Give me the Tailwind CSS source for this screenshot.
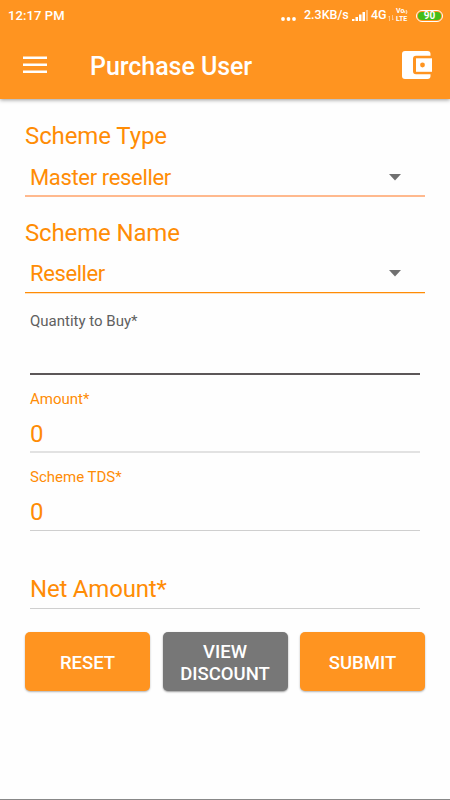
<!DOCTYPE html>
<html lang="en">
<head>
<meta charset="utf-8">
<title>Purchase User</title>
<script src="https://cdn.jsdelivr.net/npm/@tailwindcss/browser@4"></script>
</head>
<body class="bg-[#fefefe] font-[Roboto,sans-serif] text-[#ff8c05]">
<div class="flex h-[800px] w-[450px] flex-col overflow-hidden border-b border-[#888]">
  <header class="h-[99px] shrink-0 bg-[#ff9420] text-white shadow-[0_1px_4px_rgba(0,0,0,0.4)]">
    <div class="flex h-[31px] items-center pl-2 pr-[7px] text-[13px] font-medium">
      <span class="tracking-[0.1px]">12:17 PM</span>
      <svg class="ml-auto mr-[8px] mt-[7px]" width="15" height="4" fill="#fff"><circle cx="2" cy="2" r="1.900"/><circle cx="7.500" cy="2" r="1.900"/><circle cx="13" cy="2" r="1.900"/></svg>
      <span class="w-[45px] whitespace-nowrap text-[12.5px]">2.3KB/s</span>
      <svg class="ml-[3px]" width="17" height="13" fill="#fff"><path d="M0 10h2.500v2H0zM3.500 8H6v4H3.500zM7 5.500h2.500V12H7zM10.500 3H13v9h-2.500z"/><path opacity=".4" d="M14 1h2v11h-2z"/></svg>
      <span class="ml-[2px] w-[16px] text-[12.500px]">4G</span>
      <svg class="ml-[1px] mt-[5px]" width="6" height="6" fill="none" stroke="#fff" stroke-opacity=".45"><path d="M1.500 6V1L0 2.500M4.500 0v5L6 3.500"/></svg>
      <div class="ml-[2px] flex h-[15px] w-[15px] flex-col justify-between text-[7px] font-bold leading-[7px]"><div class="flex h-[7px] items-center">Vo<svg width="4" height="6" fill="none" stroke="#fff" stroke-width=".8"><path d="M.5 2q1 1 0 2M2 1q2 2 0 4"/></svg></div><div class="h-[7px]">LTE</div></div>
      <div class="ml-[5px] flex h-[12px] w-[27px] items-center justify-center rounded-full border border-white p-px"><div class="flex h-full w-full items-center justify-center rounded-full bg-[#43bd19] text-[10px] font-bold leading-none">90</div></div>
    </div>
    <div class="flex h-[68px] items-center pl-[23px] pr-[18px]">
      <svg width="24" height="18" fill="#fff"><path d="M0 .4h24v2.600H0zM0 7.400h24v2.600H0zM0 14.400h24v2.600H0z"/></svg>
      <h1 class="ml-[43px] mt-[4px] text-[25px] font-medium leading-[30px] tracking-[-0.05px]">Purchase User</h1>
      <svg class="ml-auto" width="30" height="30" viewBox="0 0 30 30"><rect y="1" width="28.500" height="28" rx="3" fill="#fff"/><path d="M30 5.700H14a3 3 0 0 0-3 3v12.600a3 3 0 0 0 3 3h16z" fill="#ff9420"/><rect x="14" y="8.300" width="16" height="13.500" fill="#fff"/><circle cx="20.500" cy="15" r="2.400" fill="#ff9420"/></svg>
    </div>
  </header>
  <main class="flex flex-col px-[25px] pt-[21px]">
    <div class="h-[97px]">
      <label class="block h-[32px] text-[24px] leading-[32px] tracking-[-0.1px]">Scheme Type</label>
      <div class="flex h-[45px] items-center justify-between border-b-2 border-[#ffb98e] pl-[5px] pr-[24px] pt-[8px] text-[22px] tracking-[-0.35px]"><span>Master reseller</span><svg class="-mt-px" width="12" height="7" fill="#707070"><path d="M0 0h12L6 6.500z"/></svg></div>
    </div>
    <div class="h-[92px]">
      <label class="block h-[32px] text-[24px] leading-[32px] tracking-[-0.15px]">Scheme Name</label>
      <div class="flex h-[44px] items-center justify-between border-b border-[#ff8c05] pl-[5px] pr-[24px] pt-[6px] text-[22px] tracking-[-0.4px] shadow-[0_1px_0_#ffe0bd]"><span>Reseller</span><svg class="-mt-px" width="12" height="7" fill="#707070"><path d="M0 0h12L6 6.500z"/></svg></div>
    </div>
    <div class="mx-[5px] h-[66px] border-b-2 border-[#5c5758] pt-[2px] text-[15px] leading-[20px] text-[#606060]">Quantity to Buy*</div>
    <div class="mx-[5px] h-[78px] border-b-2 border-[#e2e2e2] pt-[14px]">
      <div class="text-[15px] leading-[20px]">Amount*</div><div class="pt-[9px] text-[24px] leading-[32px]">0</div>
    </div>
    <div class="mx-[5px] h-[78px] border-b border-[#cfcfcf] pt-[14px]">
      <div class="text-[15px] leading-[20px]">Scheme TDS*</div><div class="pt-[9px] text-[24px] leading-[32px]">0</div>
    </div>
    <div class="mx-[5px] h-[78px] border-b border-[#cfcfcf] pt-[42px] text-[24px] leading-[32px] tracking-[-0.2px]">Net Amount*</div>
    <div class="mt-[23px] grid h-[59px] grid-cols-3 gap-[12.500px] text-center text-[18.500px] font-medium leading-[22px] text-white">
      <button class="rounded-[5px] bg-[#ff9420] pt-[2px] shadow-[0_1px_2px_rgba(0,0,0,0.3)]">RESET</button>
      <button class="rounded-[5px] bg-[#777] pt-[2px] shadow-[0_1px_2px_rgba(0,0,0,0.4)]">VIEW<br>DISCOUNT</button>
      <button class="rounded-[5px] bg-[#ff9420] pt-[2px] shadow-[0_1px_2px_rgba(0,0,0,0.3)]">SUBMIT</button>
    </div>
  </main>
</div>
</body>
</html>
